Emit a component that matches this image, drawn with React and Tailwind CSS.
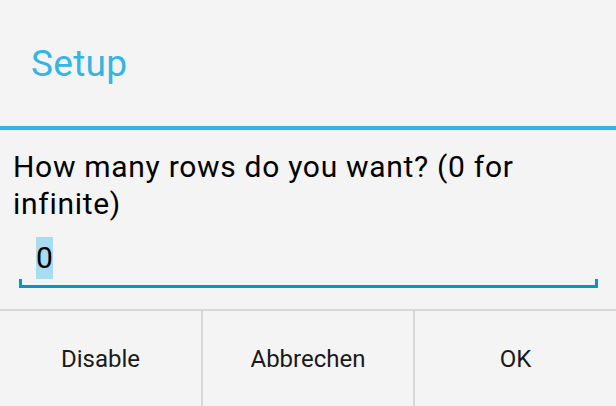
export default function App() {
  return (
    <div className="w-[616px] h-[406px] bg-[#f4f4f4] flex flex-col overflow-hidden" style={{ fontFamily: 'Roboto, "Noto Sans", sans-serif' }}>
      {/* Title */}
      <div className="h-[126px] flex items-center pl-[31px]">
        <h1 className="text-[37px] leading-none tracking-[0.3px] text-[#33b5e5]">Setup</h1>
      </div>
      <div className="h-[4px] bg-[#33b5e5]" />

      {/* Message */}
      <p className="pt-[18px] pl-[13px] pr-4 text-[30px] leading-[37px] tracking-[0.7px] text-black">
        How many rows do you want? (0 for infinite)
      </p>

      {/* Input */}
      <div className="mt-[15px] ml-[19px] w-[579px]">
        <div className="pl-[17px] h-[42px] flex">
          <span className="bg-[#a8dcf0] text-[30px] leading-[42px] text-black">0</span>
        </div>
        <div className="mt-[6px] h-[3px] bg-[#0099cc] relative">
          <div className="absolute left-0 bottom-0 w-[3px] h-[9px] bg-[#0099cc]" />
          <div className="absolute right-0 bottom-0 w-[3px] h-[9px] bg-[#0099cc]" />
        </div>
      </div>

      {/* Buttons */}
      <div className="mt-[21px] flex-1 flex border-t-2 border-[#d8d8d8]">
        <button className="w-[201px] text-[24px] text-[#1a1a1a]">Disable</button>
        <div className="w-[2px] bg-[#d8d8d8]" />
        <button className="w-[210px] text-[24px] text-[#1a1a1a]">Abbrechen</button>
        <div className="w-[2px] bg-[#d8d8d8]" />
        <button className="flex-1 text-[24px] text-[#1a1a1a]">OK</button>
      </div>
    </div>
  )
}
